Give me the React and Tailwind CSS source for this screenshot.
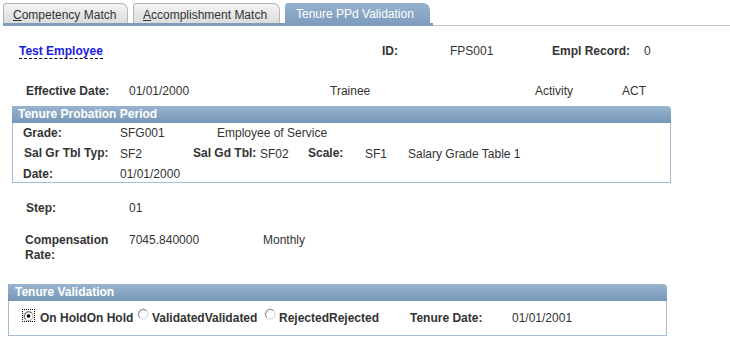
import React from "react";

function Radio({ checked }) {
  return (
    <svg width="12" height="12" viewBox="0 0 12 12">
      <circle cx="6" cy="6" r="5" fill="#ffffff" stroke={checked ? "#9a9a9a" : "#d0d0d0"} strokeWidth="1" />
      <path d="M2.5 9.5 A5 5 0 0 1 9.5 2.5" fill="none" stroke={checked ? "#555555" : "#8a8a8a"} strokeWidth="1" />
      {checked && <circle cx="6" cy="6" r="2" fill="#000000" />}
    </svg>
  );
}

export default function App() {
  const font = { fontFamily: '"Liberation Sans", Arial, sans-serif' };
  return (
    <div className="w-[730px] h-[347px] bg-white text-[12px] leading-[14px] text-[#333333] overflow-hidden" style={font}>
      {/* Tabs */}
      <div className="pl-[3px] pt-[3px]">
        <div className="flex items-end h-[20px] gap-[5px]">
          <div className="w-[125px] h-[20px] pl-[9px] pt-[4px] border border-b-0 border-[#b4b4b4] rounded-tl-[3px] rounded-tr-[7px] bg-linear-to-b from-[#f3f3f3] to-[#dcdcdc] text-[#333333]">
            <span className="underline">C</span>ompetency Match
          </div>
          <div className="w-[147px] h-[20px] pl-[9px] pt-[4px] border border-b-0 border-[#b4b4b4] rounded-tl-[3px] rounded-tr-[7px] bg-linear-to-b from-[#f3f3f3] to-[#dcdcdc] text-[#333333]">
            <span className="underline">A</span>ccomplishment Match
          </div>
          <div className="w-[145px] h-[20px] pl-[11px] pt-[4px] rounded-tl-[3px] rounded-tr-[7px] bg-linear-to-b from-[#95b1cd] to-[#7f9ebf] text-white">
            Tenure PPd Validation
          </div>
        </div>
        <div className="flex items-end">
          <div className="w-[430px] h-[3px] bg-[#7f9ebf]" />
          <div className="flex-1 h-[2px] border-b border-[#c4c4c4]" />
        </div>
      </div>

      {/* Row 1 */}
      <div className="flex mt-[18px] pl-[19px]">
        <div className="w-[363px]">
          <span className="font-bold text-[#1c1ce0] border-b border-dashed border-black">Test Employee</span>
        </div>
        <div className="w-[68px] font-bold">ID:</div>
        <div className="w-[102px]">FPS001</div>
        <div className="w-[92px] font-bold">Empl Record:</div>
        <div>0</div>
      </div>

      {/* Row 2 */}
      <div className="flex mt-[26px] pl-[26px]">
        <div className="w-[103px] font-bold">Effective Date:</div>
        <div className="w-[201px]">01/01/2000</div>
        <div className="w-[205px]">Trainee</div>
        <div className="w-[87px]">Activity</div>
        <div>ACT</div>
      </div>

      {/* Tenure Probation Period */}
      <div className="mt-[8px] ml-[12px] w-[659px]">
        <div className="h-[17px] pl-[6px] pt-[1px] rounded-tr-[4px] bg-linear-to-b from-[#98b4cf] to-[#7797b9] text-white font-bold">
          Tenure Probation Period
        </div>
        <div className="border border-t-0 border-[#a3bdd9] pt-[3px] pb-[1px] pl-[10px] flex flex-col gap-[6px]">
          <div className="flex">
            <div className="w-[97px] font-bold">Grade:</div>
            <div className="w-[97px]">SFG001</div>
            <div>Employee of Service</div>
          </div>
          <div className="flex">
            <div className="w-[97px] font-bold pl-[1px]">Sal Gr Tbl Typ:</div>
            <div className="w-[73px] pt-[1px]">SF2</div>
            <div className="w-[67px] font-bold">Sal Gd Tbl:</div>
            <div className="w-[48px] pt-[1px]">SF02</div>
            <div className="w-[57px] font-bold">Scale:</div>
            <div className="w-[43px] pt-[1px]">SF1</div>
            <div className="pt-[1px]">Salary Grade Table 1</div>
          </div>
          <div className="flex">
            <div className="w-[97px] font-bold">Date:</div>
            <div>01/01/2000</div>
          </div>
        </div>
      </div>

      {/* Step */}
      <div className="flex mt-[18px] pl-[26px]">
        <div className="w-[103px] font-bold">Step:</div>
        <div>01</div>
      </div>

      {/* Compensation */}
      <div className="flex mt-[18px] pl-[25px]">
        <div className="w-[104px] font-bold leading-[15px]">
          Compensation
          <br />
          Rate:
        </div>
        <div className="w-[134px]">7045.840000</div>
        <div>Monthly</div>
      </div>

      {/* Tenure Validation */}
      <div className="mt-[21px] ml-[8px] w-[659px]">
        <div className="h-[17px] pl-[7px] pt-[1px] rounded-tr-[4px] bg-linear-to-b from-[#98b4cf] to-[#7797b9] text-white font-bold">
          Tenure Validation
        </div>
        <div className="border border-t-0 border-[#a3bdd9] pt-[10px] pb-[10px] flex font-bold">
          <div className="w-[126px] flex pl-[13px]">
            <div className="w-[13px] h-[13px] -mt-[2px] border border-dotted border-black flex items-center justify-center">
              <Radio checked />
            </div>
            <div className="ml-[5px]">On HoldOn Hold</div>
          </div>
          <div className="w-[127px] flex">
            <div className="-mt-[3px] ml-[2px]">
              <Radio />
            </div>
            <div className="ml-[3px]">ValidatedValidated</div>
          </div>
          <div className="w-[148px] flex">
            <div className="-mt-[3px] ml-[2px]">
              <Radio />
            </div>
            <div className="ml-[3px]">RejectedRejected</div>
          </div>
          <div className="w-[102px]">Tenure Date:</div>
          <div className="font-normal">01/01/2001</div>
        </div>
      </div>
    </div>
  );
}
